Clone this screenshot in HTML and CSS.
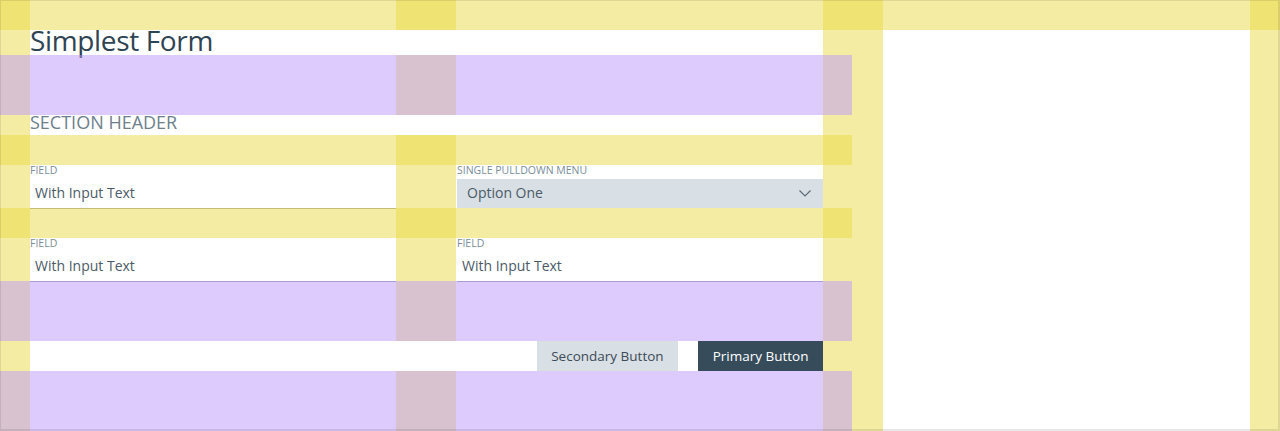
FILE: index.html
```html
<!DOCTYPE html>
<html lang="en">
<head>
<meta charset="utf-8">
<title>Simplest Form</title>
<link rel="stylesheet" href="styles.css">
</head>
<body>
<div class="page">
  <div class="gutters" aria-hidden="true">
    <div class="gutter"></div><div></div><div class="gutter"></div><div></div><div class="gutter"></div><div></div><div class="gutter"></div>
  </div>
  <div class="band band-top"></div>
  <form class="form">
    <h1 class="title">Simplest Form</h1>
    <div class="spacer"></div>
    <h2 class="section">SECTION HEADER</h2>
    <div class="band"></div>
    <div class="row">
      <label class="field">
        <span class="label">FIELD</span>
        <input class="input" type="text" value="With Input Text">
      </label>
      <div class="field">
        <span class="label">SINGLE PULLDOWN MENU</span>
        <div class="select">
          <span>Option One</span>
          <svg class="chevron" width="12" height="7" viewBox="0 0 12 7"><path d="M0.5 0.5 L6 6 L11.5 0.5" fill="none" stroke="#5b6b77" stroke-width="1.2"/></svg>
        </div>
      </div>
    </div>
    <div class="band"></div>
    <div class="row">
      <label class="field">
        <span class="label">FIELD</span>
        <input class="input" type="text" value="With Input Text">
      </label>
      <label class="field">
        <span class="label">FIELD</span>
        <input class="input" type="text" value="With Input Text">
      </label>
    </div>
    <div class="spacer"></div>
    <div class="actions">
      <button type="button" class="btn btn-secondary">Secondary Button</button>
      <button type="button" class="btn btn-primary">Primary Button</button>
    </div>
    <div class="spacer"></div>
  </form>
  <div class="frame" aria-hidden="true"></div>
</div>
</body>
</html>
```

FILE: styles.css
```css
* { box-sizing: border-box; }
html, body { margin: 0; padding: 0; background: #fff; }
body {
  font-family: "Open Sans", "Noto Sans", sans-serif;
  color: #2f4452;
  height: 431px;
  overflow: hidden;
}
.page {
  position: relative;
  width: 1280px;
  height: 431px;
}
.gutters {
  position: absolute;
  inset: 0;
  display: grid;
  grid-template-columns: 30px 366px 60px 367px 60px 367px 30px;
  pointer-events: none;
  z-index: 0;
}
.gutter { background: rgba(233, 217, 69, 0.5); }
.frame {
  position: absolute;
  inset: 0;
  border-style: solid;
  border-color: rgba(0, 0, 0, 0.09);
  border-width: 1px 2px 2px 1px;
  pointer-events: none;
  z-index: 3;
}
.band {
  position: relative;
  height: 30px;
  background: rgba(233, 217, 69, 0.5);
  margin: 0 -29px 0 -30px;
}
.band-top { margin: 0; width: 100%; }
.spacer {
  position: relative;
  height: 60px;
  background: rgba(187, 151, 251, 0.5);
  margin: 0 -29px 0 -30px;
  z-index: 1;
}
.form {
  position: relative;
  z-index: 1;
  width: 852px;
  padding: 0 29px 0 30px;
  margin: 0;
}
.title {
  margin: 0;
  height: 25px;
  font-size: 28px;
  font-weight: 400;
  line-height: 20px;
  letter-spacing: -0.35px;
  color: #2f4452;
  background: #fff;
  white-space: nowrap;
}
.section {
  margin: 0;
  height: 20px;
  font-size: 18px;
  font-weight: 400;
  line-height: 15px;
  color: #6e808c;
  background: #fff;
}
.row {
  display: grid;
  grid-template-columns: 366px 1fr;
  column-gap: 61px;
  height: 43px;
}
.field {
  display: flex;
  flex-direction: column;
  background: #fff;
}
.label {
  display: block;
  height: 14px;
  font-size: 10.5px;
  line-height: 10px;
  color: #7a8d9a;
  white-space: nowrap;
}
.input {
  display: block;
  width: 100%;
  height: 29px;
  margin: 0;
  border: 0;
  padding: 0 5px 2px;
  font-family: inherit;
  font-size: 14px;
  color: #4b5b67;
  background: #fff;
  box-shadow: 0 1px 0 #9aa3aa;
  outline: none;
}
.select {
  height: 29px;
  display: flex;
  align-items: center;
  justify-content: space-between;
  padding: 0 12px 2px 10px;
  background: #d8dfe5;
  font-size: 14px;
  color: #4b5b67;
}
.chevron { display: block; margin-top: 2px; }
.actions {
  display: flex;
  justify-content: flex-end;
  gap: 20px;
  height: 30px;
  background: #fff;
}
.btn {
  height: 30px;
  margin: 0;
  border: 0;
  font-family: inherit;
  font-size: 13.5px;
  padding: 0 14.5px;
  cursor: pointer;
}
.btn-secondary { background: #d8dfe5; color: #3c4b56; }
.btn-primary { background: #364c5a; color: #fff; padding: 0 14.5px; }
```
